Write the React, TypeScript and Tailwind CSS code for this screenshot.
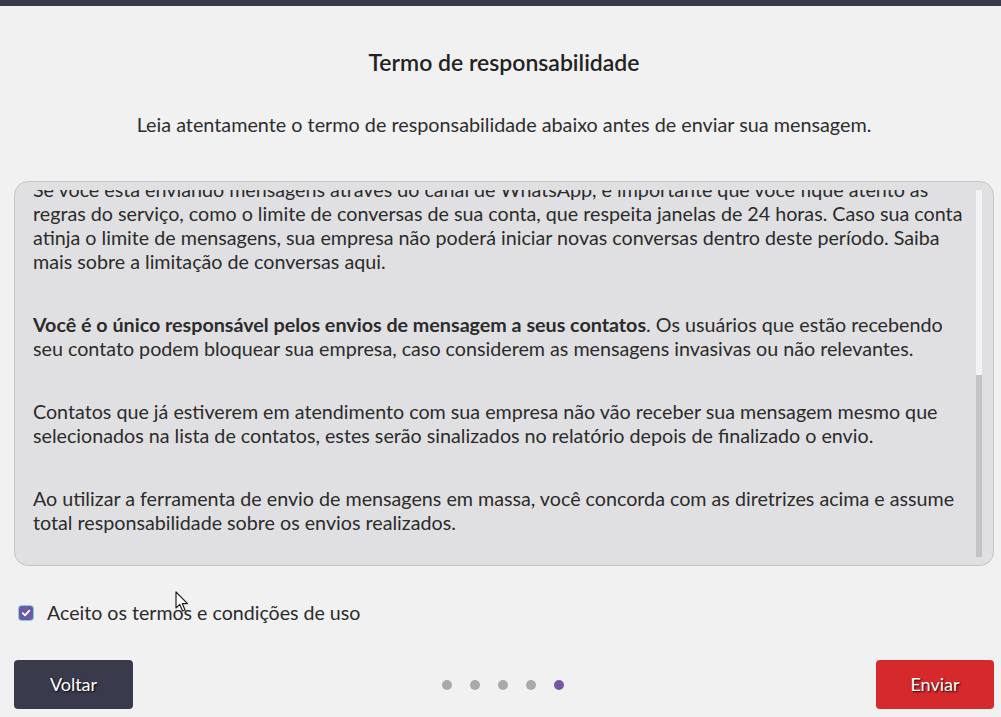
import React from "react";

function Lines({ lines }: { lines: React.ReactNode[] }) {
  return (
    <p className="mb-[39px]">
      {lines.map((l, i) => (
        <span key={i} className="block whitespace-nowrap">
          {l}
        </span>
      ))}
    </p>
  );
}

export default function App() {
  return (
    <div className="relative min-h-[717px] w-full bg-[#f1f1f1] font-['Lato',_'Noto_Sans',sans-serif] text-[#2e2e2e]">
      <div className="h-[6px] w-full bg-[#393a4c]" />
      <div className="flex flex-col pl-[14px] pr-[7px]">
        <h1 className="mt-[42px] text-center text-[23px] font-semibold leading-[28px] text-[#232323]">
          Termo de responsabilidade
        </h1>
        <p className="mt-[36px] text-center text-[19.8px] leading-[24px] text-[#2e2e2e]">
          Leia atentamente o termo de responsabilidade abaixo antes de enviar sua mensagem.
        </p>
        <div className="mt-[45px] flex h-[385px] rounded-[14px] border border-[#c6c6c8] bg-[#e0e0e2] py-[8px] pl-[18px] pr-[11px]">
          <div className="flex-1 overflow-hidden pr-[10px]">
            <div className="mt-[-12px] text-[19.7px] leading-[24px] text-[#2b2b2b]">
              <Lines
                lines={[
                  "Se você está enviando mensagens através do canal de WhatsApp, é importante que você fique atento às",
                  "regras do serviço, como o limite de conversas de sua conta, que respeita janelas de 24 horas. Caso sua conta",
                  "atinja o limite de mensagens, sua empresa não poderá iniciar novas conversas dentro deste período. Saiba",
                  "mais sobre a limitação de conversas aqui.",
                ]}
              />
              <Lines
                lines={[
                  <>
                    <b className="font-bold">Você é o único responsável pelos envios de mensagem a seus contatos</b>. Os
                    usuários que estão recebendo
                  </>,
                  "seu contato podem bloquear sua empresa, caso considerem as mensagens invasivas ou não relevantes.",
                ]}
              />
              <Lines
                lines={[
                  "Contatos que já estiverem em atendimento com sua empresa não vão receber sua mensagem mesmo que",
                  "selecionados na lista de contatos, estes serão sinalizados no relatório depois de finalizado o envio.",
                ]}
              />
              <Lines
                lines={[
                  "Ao utilizar a ferramenta de envio de mensagens em massa, você concorda com as diretrizes acima e assume",
                  "total responsabilidade sobre os envios realizados.",
                ]}
              />
            </div>
          </div>
          <div className="flex w-[6px] flex-col bg-[#f3f3f3]">
            <div className="flex-1" />
            <div className="h-[182px] bg-[#c3c3c3]" />
          </div>
        </div>
        <label className="mt-[35px] flex items-center gap-[14px] pl-[5px] text-[19.6px] leading-[24px] text-[#2b2b2b]">
          <span className="flex h-[14px] w-[14px] items-center justify-center rounded-[3px] bg-[#6a5aa6] ring-1 ring-[#7fd0e0]">
            <svg width="10" height="10" viewBox="0 0 10 10">
              <path d="M1.8 5.2 L4 7.3 L8.3 2.6" fill="none" stroke="white" strokeWidth="1.8" strokeLinecap="round" strokeLinejoin="round" />
            </svg>
          </span>
          Aceito os termos e condições de uso
        </label>
        <div className="mt-[35px] flex items-center justify-between">
          <button className="flex h-[49px] w-[119px] items-center justify-center rounded-[4px] bg-[#393a4c] text-[18px] text-white [text-shadow:1px_1px_2px_rgba(0,0,0,0.9)]">
            Voltar
          </button>
          <div className="flex items-center gap-[18px] pr-[4px]">
            <span className="h-[10px] w-[10px] rounded-full bg-[#a9a9a9]" />
            <span className="h-[10px] w-[10px] rounded-full bg-[#a9a9a9]" />
            <span className="h-[10px] w-[10px] rounded-full bg-[#a9a9a9]" />
            <span className="h-[10px] w-[10px] rounded-full bg-[#a9a9a9]" />
            <span className="h-[10px] w-[10px] rounded-full bg-[#7557a6]" />
          </div>
          <button className="flex h-[49px] w-[118px] items-center justify-center rounded-[4px] bg-[#d6292c] text-[18px] text-white [text-shadow:1px_1px_2px_rgba(0,0,0,0.9)]">
            Enviar
          </button>
        </div>
      </div>
      <svg className="absolute left-[175px] top-[591px]" width="14" height="22" viewBox="0 0 14 22">
        <path d="M1 1 L1 17 L4.8 13.4 L7.6 20 L10 19 L7.3 12.6 L12.5 12.6 Z" fill="white" stroke="#222" strokeWidth="1.2" strokeLinejoin="round" />
      </svg>
    </div>
  );
}
